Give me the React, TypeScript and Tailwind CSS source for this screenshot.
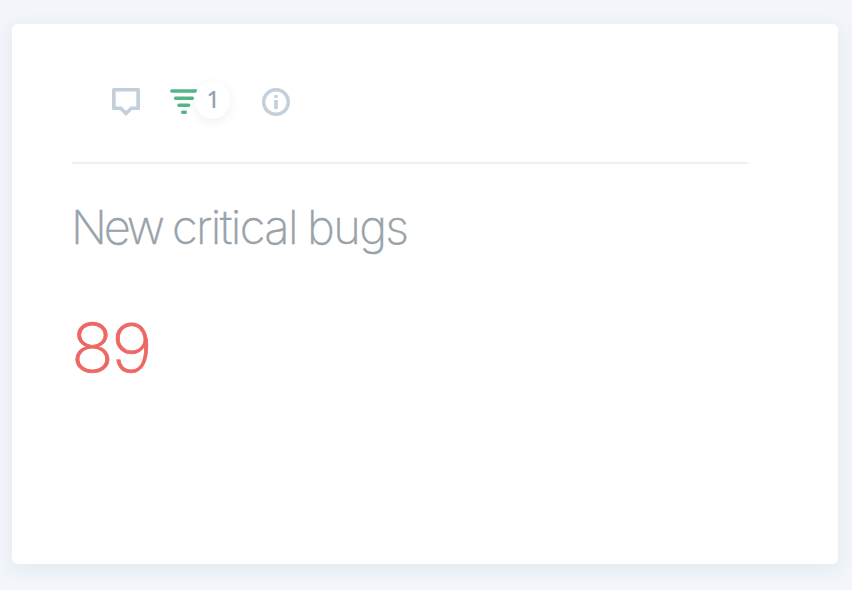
export default function App() {
  return (
    <main className="h-[590px] w-[852px] bg-[#f2f6fa] pt-6 pl-3 font-[Inter,sans-serif]">
      <section className="h-[540px] w-[826px] rounded-md bg-white pl-[60px] shadow-[0_4px_20px_rgba(40,60,80,0.08)]">
        <header className="flex h-[140px] w-[676px] items-start border-b-2 border-[#ebf0f5] pt-[56px] pl-[38px]">
          <svg className="h-[44px] w-[32px] shrink-0" viewBox="0 0 32 44" fill="none">
            <path d="M2 9.5Q2 8 3.5 8H28.5Q30 8 30 9.5V28.5Q30 30 28.5 30H22L16 36L10 30H3.5Q2 30 2 28.5ZM5.7 11.5V26.5H11.5L16 31L20.5 26.5H26.3V11.5Z" fill="#c3d0dc" fillRule="evenodd" />
          </svg>
          <svg className="ml-[27px] h-[44px] w-[30px] shrink-0" viewBox="0 0 30 44" fill="none">
            <path d="M2.9 11H27M6.6 18.2H23.2M10 25.2H19.6M13.7 32.2H16.3" stroke="#54b588" strokeWidth="3.6" strokeLinecap="round" />
          </svg>
          <span className="mt-px -ml-[4px] flex h-[38px] w-[35px] items-center justify-center rounded-full bg-white pb-px pl-px font-[Noto_Sans,sans-serif] text-[23px] leading-none font-medium text-[#8da4b8] shadow-[0_3px_10px_rgba(40,60,80,0.08)]">1</span>
          <svg className="ml-[31px] h-[44px] w-[30px] shrink-0" viewBox="0 0 30 44" fill="none">
            <circle cx="15" cy="22" r="12.3" stroke="#c3d0dc" strokeWidth="3.4" />
            <rect x="13.2" y="20" width="3.6" height="9" fill="#c3d0dc" />
            <rect x="13.2" y="15" width="3.6" height="3" rx="1.3" fill="#c3d0dc" />
          </svg>
        </header>
        <h1 className="mt-[34px] -ml-px text-[47px] leading-[58px] font-extralight tracking-[-1.6px] [word-spacing:-1.5px] text-[#98a2aa] [-webkit-text-stroke:0.4px_#98a2aa]"><span className="tracking-[-3.2px]">New</span> critical bugs</h1>
        <p className="mt-[52px] -ml-px w-fit origin-left scale-x-[1.06] text-[67px] leading-[79px] font-extralight tracking-[-2.5px] text-[#ed6864] [-webkit-text-stroke:0.8px_#ed6864]">89</p>
      </section>
    </main>
  );
}
